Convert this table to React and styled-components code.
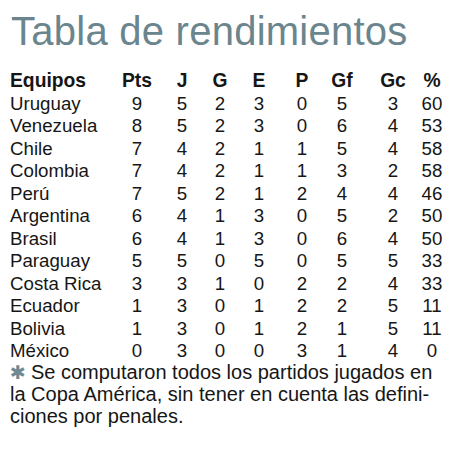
import React from "react";
import styled, { createGlobalStyle } from "styled-components";

const GlobalStyle = createGlobalStyle`
  html, body {
    margin: 0;
    padding: 0;
    background: #ffffff;
  }
  body {
    font-family: "Liberation Sans", Arial, sans-serif;
    color: #161616;
  }
`;

const Page = styled.div`
  width: 450px;
  height: 459px;
  padding: 7px 0 0 10px;
  box-sizing: border-box;
  overflow: hidden;
`;

const Title = styled.h1`
  margin: 0 0 15px 1px;
  font-size: 40px;
  line-height: 48px;
  font-weight: 400;
  color: #6b858e;
  letter-spacing: 0.25px;
`;

const Table = styled.div`
  display: grid;
  grid-template-columns: 108px 38px 52px 24px 54px 32px 48px 54px 24px;
  font-size: 18.7px;
  line-height: 22.5px;
`;

const Cell = styled.div`
  text-align: ${(p) => (p.$name ? "left" : "center")};
  font-weight: ${(p) => (p.$head ? 700 : 400)};
  font-size: ${(p) => (p.$head ? "19.3px" : "inherit")};
  white-space: nowrap;
`;

const Note = styled.p`
  margin: -2px 0 0;
  font-size: 20px;
  line-height: 22px;
  white-space: nowrap;
`;

const Star = styled.span`
  font-family: "DejaVu Sans", sans-serif;
  color: #6e8992;
  font-size: 19px;
  margin-right: 5px;
`;

const columns = ["Equipos", "Pts", "J", "G", "E", "P", "Gf", "Gc", "%"];

const rows = [
  ["Uruguay", 9, 5, 2, 3, 0, 5, 3, 60],
  ["Venezuela", 8, 5, 2, 3, 0, 6, 4, 53],
  ["Chile", 7, 4, 2, 1, 1, 5, 4, 58],
  ["Colombia", 7, 4, 2, 1, 1, 3, 2, 58],
  ["Perú", 7, 5, 2, 1, 2, 4, 4, 46],
  ["Argentina", 6, 4, 1, 3, 0, 5, 2, 50],
  ["Brasil", 6, 4, 1, 3, 0, 6, 4, 50],
  ["Paraguay", 5, 5, 0, 5, 0, 5, 5, 33],
  ["Costa Rica", 3, 3, 1, 0, 2, 2, 4, 33],
  ["Ecuador", 1, 3, 0, 1, 2, 2, 5, 11],
  ["Bolivia", 1, 3, 0, 1, 2, 1, 5, 11],
  ["México", 0, 3, 0, 0, 3, 1, 4, 0],
];

const App = () => {
  return (
    <>
      <GlobalStyle />
      <Page>
        <Title>Tabla de rendimientos</Title>
        <Table>
          {columns.map((c, i) => (
            <Cell key={c} $head $name={i === 0}>
              {c}
            </Cell>
          ))}
          {rows.map((r) =>
            r.map((v, i) => (
              <Cell key={r[0] + i} $name={i === 0}>
                {v}
              </Cell>
            ))
          )}
        </Table>
        <Note>
          <Star>✱</Star>Se computaron todos los partidos jugados en
          <br />
          la Copa América, sin tener en cuenta las defini-
          <br />
          ciones por penales.
        </Note>
      </Page>
    </>
  );
};

export default App;
